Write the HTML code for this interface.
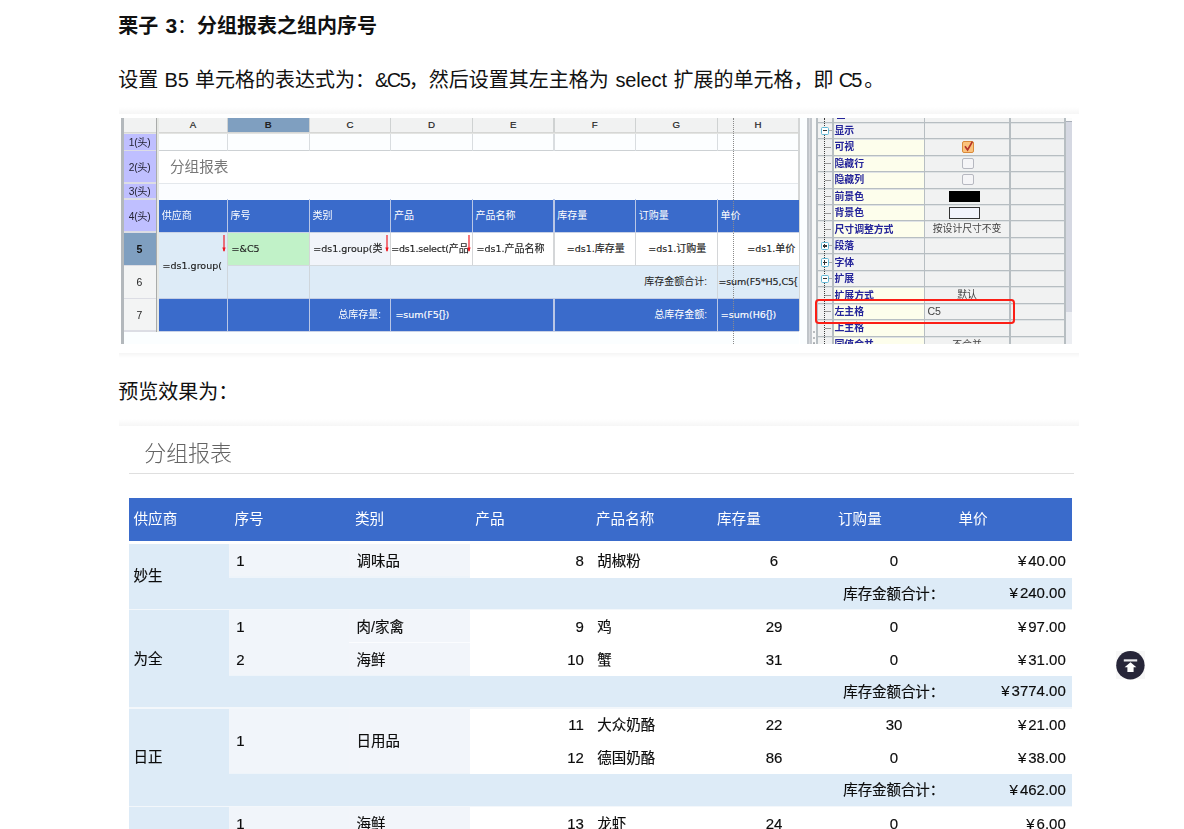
<!DOCTYPE html>
<html lang="zh-CN">
<head>
<meta charset="utf-8">
<title>分组报表之组内序号</title>
<style>
html,body{margin:0;padding:0;background:#fff;}
body{width:1184px;height:829px;overflow:hidden;position:relative;font-family:"Liberation Sans","Noto Sans CJK SC",sans-serif;}
body div, body svg, body h2, body p{position:absolute;white-space:nowrap;}
.img{left:0;top:0;width:1184px;height:829px;}
#design{filter:blur(0.35px);}
#preview{filter:blur(0.3px);}
.k{-webkit-text-stroke:0.16px;}
.w{display:inline-block;position:static;text-align:center;}
.f{font-family:"DejaVu Sans","Noto Sans CJK SC",sans-serif;-webkit-text-stroke:0.15px;}
.c{font-size:10px;}
.b{font-family:"Liberation Sans",sans-serif;font-size:10px;}
.ys{display:inline-block;width:2px;position:static;}
</style>
</head>
<body>
<!-- page text -->
<h2 class="t" style="left:118.3px;top:6px;height:40px;line-height:40px;font-size:20px;font-weight:bold;margin:0;color:#111;">栗子<span class="w" style="width:18.8px;text-align:right;font-size:21px;"> 3</span><span style="font-weight:normal">：</span>分组报表之组内序号</h2>
<p class="t" style="left:118.3px;top:59.5px;height:40px;line-height:40px;font-size:20px;margin:0;color:#111;">设置<span class="w" style="width:36.7px;"> B5 </span>单元格的表达式为：<span class="w" style="width:33.8px;letter-spacing:-1.5px;">&amp;C5</span>，然后设置其左主格为<span class="w" style="width:64.7px;letter-spacing:-0.15px;"> select </span>扩展的单元格，即<span class="w" style="width:27.2px;letter-spacing:-1.8px;text-align:right;"> C5</span><span style="margin-left:3.5px">。</span></p>
<p class="t" style="left:118.3px;top:371.5px;height:40px;line-height:40px;font-size:20px;margin:0;color:#111;">预览效果为：</p>
<!-- designer screenshot -->
<div class="img" id="design">
<div style="left:119.00px;top:106.70px;width:959.50px;height:6.90px;background:linear-gradient(#ffffff,#f6f6f6);"></div>
<div style="left:119.00px;top:352.70px;width:959.50px;height:5.30px;background:linear-gradient(#f5f5f5,#ffffff);"></div>
<div style="left:121.40px;top:118.00px;width:2.40px;height:226.00px;background:#b3b8bc;"></div>
<div style="left:123.80px;top:118.00px;width:675.40px;height:226.00px;background:#fbfeff;"></div>
<div style="left:123.80px;top:118.00px;width:675.40px;height:14.00px;background:#f1f2f2;"></div>
<div style="left:227.30px;top:118.00px;width:82.10px;height:14.00px;background:#7f9fc0;"></div>
<div style="left:123.80px;top:131.50px;width:675.40px;height:2.50px;background:linear-gradient(#cfd0ce,#e9eae8);"></div>
<div style="left:123.80px;top:134.00px;width:32.50px;height:98.30px;background:#bfbfff;"></div>
<div style="left:123.80px;top:232.30px;width:32.50px;height:33.20px;background:#7f9fc0;"></div>
<div style="left:123.80px;top:265.50px;width:32.50px;height:65.50px;background:#f3f4f4;"></div>
<div style="left:123.80px;top:149.60px;width:32.50px;height:1.60px;background:#dcdde4;"></div>
<div style="left:123.80px;top:182.10px;width:32.50px;height:1.60px;background:#dcdde4;"></div>
<div style="left:123.80px;top:198.10px;width:32.50px;height:1.60px;background:#dcdde4;"></div>
<div style="left:123.80px;top:231.40px;width:32.50px;height:1.60px;background:#dcdde4;"></div>
<div style="left:123.80px;top:264.60px;width:32.50px;height:1.60px;background:#dcdde4;"></div>
<div style="left:123.80px;top:297.60px;width:32.50px;height:1.60px;background:#dcdde4;"></div>
<div style="left:123.80px;top:330.10px;width:32.50px;height:1.60px;background:#dcdde4;"></div>
<div style="left:156.20px;top:118.00px;width:1.20px;height:213.50px;background:#a9abaa;"></div>
<div style="left:157.40px;top:118.00px;width:1.20px;height:213.50px;background:#e6e8e4;"></div>
<div style="left:226.60px;top:118.00px;width:1.40px;height:14.00px;background:#cfd2d2;"></div>
<div style="left:308.70px;top:118.00px;width:1.40px;height:14.00px;background:#cfd2d2;"></div>
<div style="left:390.00px;top:118.00px;width:1.40px;height:14.00px;background:#cfd2d2;"></div>
<div style="left:471.70px;top:118.00px;width:1.40px;height:14.00px;background:#cfd2d2;"></div>
<div style="left:553.30px;top:118.00px;width:1.40px;height:14.00px;background:#cfd2d2;"></div>
<div style="left:634.80px;top:118.00px;width:1.40px;height:14.00px;background:#cfd2d2;"></div>
<div style="left:716.50px;top:118.00px;width:1.40px;height:14.00px;background:#cfd2d2;"></div>
<div style="left:798.30px;top:118.00px;width:1.40px;height:14.00px;background:#cfd2d2;"></div>
<div style="left:158.60px;top:134.00px;width:640.40px;height:16.50px;background:#fcfeff;"></div>
<div style="left:158.60px;top:150.50px;width:640.40px;height:32.50px;background:#ffffff;"></div>
<div style="left:158.60px;top:183.00px;width:640.40px;height:16.00px;background:#fbfdff;"></div>
<div style="left:158.60px;top:149.90px;width:640.40px;height:1.20px;background:#cdd1d4;"></div>
<div style="left:158.60px;top:182.60px;width:640.40px;height:1.20px;background:#e4e8ec;"></div>
<div style="left:226.70px;top:134.00px;width:1.20px;height:16.50px;background:#d9dde0;"></div>
<div style="left:308.80px;top:134.00px;width:1.20px;height:16.50px;background:#d9dde0;"></div>
<div style="left:390.10px;top:134.00px;width:1.20px;height:16.50px;background:#d9dde0;"></div>
<div style="left:471.80px;top:134.00px;width:1.20px;height:16.50px;background:#d9dde0;"></div>
<div style="left:553.40px;top:134.00px;width:1.20px;height:16.50px;background:#d9dde0;"></div>
<div style="left:634.90px;top:134.00px;width:1.20px;height:16.50px;background:#d9dde0;"></div>
<div style="left:716.60px;top:134.00px;width:1.20px;height:16.50px;background:#d9dde0;"></div>
<div style="left:798.40px;top:134.00px;width:1.20px;height:16.50px;background:#d9dde0;"></div>
<div style="left:798.40px;top:118.00px;width:1.20px;height:213.00px;background:#d4d6d6;"></div>
<div style="left:158.60px;top:199.90px;width:640.40px;height:32.40px;background:#3a6bcb;"></div>
<div style="left:158.60px;top:232.30px;width:68.70px;height:66.20px;background:#ddebf7;"></div>
<div style="left:227.30px;top:232.30px;width:82.10px;height:33.20px;background:#c1f2c8;"></div>
<div style="left:309.40px;top:232.30px;width:81.30px;height:33.20px;background:#f1f4fa;"></div>
<div style="left:390.70px;top:232.30px;width:408.30px;height:33.20px;background:#ffffff;"></div>
<div style="left:227.30px;top:265.50px;width:571.70px;height:33.00px;background:#ddebf7;"></div>
<div style="left:158.60px;top:298.50px;width:640.40px;height:32.50px;background:#3a6bcb;"></div>
<div style="left:226.70px;top:199.00px;width:1.20px;height:33.30px;background:#b9c6e6;"></div>
<div style="left:308.80px;top:199.00px;width:1.20px;height:33.30px;background:#b9c6e6;"></div>
<div style="left:390.10px;top:199.00px;width:1.20px;height:33.30px;background:#b9c6e6;"></div>
<div style="left:471.80px;top:199.00px;width:1.20px;height:33.30px;background:#b9c6e6;"></div>
<div style="left:553.40px;top:199.00px;width:1.20px;height:33.30px;background:#b9c6e6;"></div>
<div style="left:634.90px;top:199.00px;width:1.20px;height:33.30px;background:#b9c6e6;"></div>
<div style="left:716.60px;top:199.00px;width:1.20px;height:33.30px;background:#b9c6e6;"></div>
<div style="left:226.70px;top:298.50px;width:1.20px;height:32.50px;background:#b9c6e6;"></div>
<div style="left:308.80px;top:298.50px;width:1.20px;height:32.50px;background:#b9c6e6;"></div>
<div style="left:390.10px;top:298.50px;width:1.20px;height:32.50px;background:#b9c6e6;"></div>
<div style="left:553.40px;top:298.50px;width:1.20px;height:32.50px;background:#b9c6e6;"></div>
<div style="left:716.60px;top:298.50px;width:1.20px;height:32.50px;background:#b9c6e6;"></div>
<div style="left:226.70px;top:232.30px;width:1.20px;height:33.20px;background:#d4d6d8;"></div>
<div style="left:308.80px;top:232.30px;width:1.20px;height:33.20px;background:#d4d6d8;"></div>
<div style="left:390.10px;top:232.30px;width:1.20px;height:33.20px;background:#d4d6d8;"></div>
<div style="left:471.80px;top:232.30px;width:1.20px;height:33.20px;background:#d4d6d8;"></div>
<div style="left:553.40px;top:232.30px;width:1.20px;height:33.20px;background:#d4d6d8;"></div>
<div style="left:634.90px;top:232.30px;width:1.20px;height:33.20px;background:#d4d6d8;"></div>
<div style="left:716.60px;top:232.30px;width:1.20px;height:33.20px;background:#d4d6d8;"></div>
<div style="left:226.70px;top:265.50px;width:1.20px;height:33.00px;background:#cfd6dc;"></div>
<div style="left:308.80px;top:265.50px;width:1.20px;height:33.00px;background:#cfd6dc;"></div>
<div style="left:716.60px;top:265.50px;width:1.20px;height:33.00px;background:#cfd6dc;"></div>
<div style="left:227.30px;top:265.00px;width:571.70px;height:1.00px;background:#d3d9de;"></div>
<div style="left:158.60px;top:231.80px;width:640.40px;height:1.00px;background:#c9d2e6;"></div>
<div style="left:158.60px;top:298.00px;width:640.40px;height:1.00px;background:#c3cde4;"></div>
<div style="left:158.60px;top:330.60px;width:640.40px;height:1.00px;background:#c9d2e6;"></div>
<div style="left:732.6px;top:118px;width:0;height:226px;border-left:1px dotted #8a8a8a;"></div>
<div style="left:-7.10px;width:400px;text-align:center;top:114.80px;height:19px;line-height:19px;font-size:9.7px;color:#222;-webkit-text-stroke:0.2px;">A</div>
<div style="left:68.35px;width:400px;text-align:center;top:114.80px;height:19px;line-height:19px;font-size:9.7px;color:#222;font-weight:bold;">B</div>
<div style="left:150.05px;width:400px;text-align:center;top:114.80px;height:19px;line-height:19px;font-size:9.7px;color:#222;-webkit-text-stroke:0.2px;">C</div>
<div style="left:231.55px;width:400px;text-align:center;top:114.80px;height:19px;line-height:19px;font-size:9.7px;color:#222;-webkit-text-stroke:0.2px;">D</div>
<div style="left:313.20px;width:400px;text-align:center;top:114.80px;height:19px;line-height:19px;font-size:9.7px;color:#222;-webkit-text-stroke:0.2px;">E</div>
<div style="left:394.75px;width:400px;text-align:center;top:114.80px;height:19px;line-height:19px;font-size:9.7px;color:#222;-webkit-text-stroke:0.2px;">F</div>
<div style="left:476.35px;width:400px;text-align:center;top:114.80px;height:19px;line-height:19px;font-size:9.7px;color:#222;-webkit-text-stroke:0.2px;">G</div>
<div style="left:558.10px;width:400px;text-align:center;top:114.80px;height:19px;line-height:19px;font-size:9.7px;color:#222;-webkit-text-stroke:0.2px;">H</div>
<div style="left:-60.40px;width:400px;text-align:center;top:132.90px;height:20px;line-height:20px;font-size:10.2px;color:#223;letter-spacing:-0.2px;">1(头)</div>
<div style="left:-60.40px;width:400px;text-align:center;top:157.80px;height:20px;line-height:20px;font-size:10.2px;color:#223;letter-spacing:-0.2px;">2(头)</div>
<div style="left:-60.40px;width:400px;text-align:center;top:182.40px;height:20px;line-height:20px;font-size:10.2px;color:#223;letter-spacing:-0.2px;">3(头)</div>
<div style="left:-60.40px;width:400px;text-align:center;top:206.60px;height:20px;line-height:20px;font-size:10.2px;color:#223;letter-spacing:-0.2px;">4(头)</div>
<div style="left:-60.60px;width:400px;text-align:center;top:238.70px;height:21px;line-height:21px;font-size:10.6px;color:#111;font-weight:bold;">5</div>
<div style="left:-60.60px;width:400px;text-align:center;top:271.70px;height:21px;line-height:21px;font-size:10.4px;color:#222;">6</div>
<div style="left:-60.60px;width:400px;text-align:center;top:304.70px;height:21px;line-height:21px;font-size:10.4px;color:#222;">7</div>
<div style="left:170.00px;top:152.50px;height:29px;line-height:29px;font-size:14.6px;color:#777;">分组报表</div>
<div style="left:161.70px;top:206.00px;height:20px;line-height:20px;font-size:10px;color:#fff;">供应商</div>
<div style="left:230.50px;top:206.00px;height:20px;line-height:20px;font-size:10px;color:#fff;">序号</div>
<div style="left:312.60px;top:206.00px;height:20px;line-height:20px;font-size:10px;color:#fff;">类别</div>
<div style="left:393.90px;top:206.00px;height:20px;line-height:20px;font-size:10px;color:#fff;">产品</div>
<div style="left:475.60px;top:206.00px;height:20px;line-height:20px;font-size:10px;color:#fff;">产品名称</div>
<div style="left:557.20px;top:206.00px;height:20px;line-height:20px;font-size:10px;color:#fff;">库存量</div>
<div style="left:638.70px;top:206.00px;height:20px;line-height:20px;font-size:10px;color:#fff;">订购量</div>
<div style="left:720.40px;top:206.00px;height:20px;line-height:20px;font-size:10px;color:#fff;">单价</div>
<div class="f" style="left:162.60px;top:255.90px;height:19px;line-height:19px;font-size:9.5px;color:#222;">=ds1.group(</div>
<div class="f" style="left:231.60px;top:238.90px;height:19px;line-height:19px;font-size:9.5px;color:#222;">=&amp;C5</div>
<div class="f" style="left:313.20px;top:238.90px;height:19px;line-height:19px;font-size:9.5px;color:#222;">=ds1.group(<span class="c">类</span></div>
<div style="left:390.7px;top:233px;width:81px;height:32px;overflow:hidden;">
<div class="f" style="letter-spacing:-0.2px;left:0.60px;top:5.90px;height:19px;line-height:19px;font-size:9.5px;color:#222;">=ds1.select(<span class="c">产品</span></div>
</div>
<div class="f" style="left:476.60px;top:238.90px;height:19px;line-height:19px;font-size:9.5px;color:#222;">=ds1.<span class="c">产品名称</span></div>
<div class="f" style="right:559.20px;top:238.90px;height:19px;line-height:19px;font-size:9.5px;color:#222;">=ds1.<span class="c">库存量</span></div>
<div class="f" style="right:477.70px;top:238.90px;height:19px;line-height:19px;font-size:9.5px;color:#222;">=ds1.<span class="c">订购量</span></div>
<div class="f" style="right:388.80px;top:238.90px;height:19px;line-height:19px;font-size:9.5px;color:#222;">=ds1.<span class="c">单价</span></div>
<div style="right:477.00px;top:271.80px;height:20px;line-height:20px;font-size:10px;color:#222;">库存金额合计:</div>
<div class="f" style="letter-spacing:-0.12px;left:718.40px;top:272.30px;height:19px;line-height:19px;font-size:9.5px;color:#222;">=sum(F5*H5,C5<span class="b">{</span></div>
<div style="right:803.00px;top:304.80px;height:20px;line-height:20px;font-size:10px;color:#fff;">总库存量:</div>
<div class="f" style="left:395.40px;top:305.30px;height:19px;line-height:19px;font-size:9.5px;color:#fff;">=sum(F5<span class="b">{}</span>)</div>
<div style="right:477.00px;top:304.80px;height:20px;line-height:20px;font-size:10px;color:#fff;">总库存金额:</div>
<div class="f" style="left:720.80px;top:305.30px;height:19px;line-height:19px;font-size:9.5px;color:#fff;">=sum(H6<span class="b">{}</span>)</div>
<svg style="left:220.50px;top:234.50px;" width="6" height="17.00" viewBox="0 0 6 17.00"><path d="M3 0V16.00" stroke="#f0141e" stroke-width="1.15" fill="none"/><path d="M1.3 12.40L3 17.00L4.7 12.40Z" fill="#f0141e"/></svg>
<svg style="left:384.30px;top:234.50px;" width="6" height="17.00" viewBox="0 0 6 17.00"><path d="M3 0V16.00" stroke="#f0141e" stroke-width="1.15" fill="none"/><path d="M1.3 12.40L3 17.00L4.7 12.40Z" fill="#f0141e"/></svg>
<svg style="left:465.50px;top:234.50px;" width="6" height="17.00" viewBox="0 0 6 17.00"><path d="M3 0V16.00" stroke="#f0141e" stroke-width="1.15" fill="none"/><path d="M1.3 12.40L3 17.00L4.7 12.40Z" fill="#f0141e"/></svg>
<div style="left:799.60px;top:118.00px;width:7.60px;height:226.00px;background:#fbfeff;"></div>
<div style="left:807.20px;top:118.00px;width:1.80px;height:226.00px;background:#bfc4c9;"></div>
<div style="left:809.00px;top:118.00px;width:1.00px;height:226.00px;background:#d5d8dc;"></div>
<div style="left:810.00px;top:118.00px;width:2.00px;height:226.00px;background:#c3c7cc;"></div>
<div style="left:812.00px;top:118.00px;width:4.00px;height:226.00px;background:#f7f8f8;"></div>
<div style="left:816.00px;top:118.00px;width:250.00px;height:226.00px;background:#f1f2f2;"></div>
<div style="left:1066.00px;top:121.50px;width:6.00px;height:222.50px;background:#d5d8e2;"></div>
<div style="left:1066.00px;top:118.00px;width:6.00px;height:2.50px;background:#fbfcfc;"></div>
<div style="left:1066.00px;top:120.50px;width:6.00px;height:1.80px;background:#a9afb9;"></div>
<div style="left:1066.00px;top:312.40px;width:6.00px;height:31.60px;background:#eceef2;"></div>
<div style="left:833.70px;top:138.75px;width:90.30px;height:16.45px;background:#fdfeec;"></div>
<div style="left:833.70px;top:155.20px;width:90.30px;height:16.45px;background:#fdfeec;"></div>
<div style="left:833.70px;top:171.65px;width:90.30px;height:16.45px;background:#fdfeec;"></div>
<div style="left:833.70px;top:188.10px;width:90.30px;height:16.45px;background:#fdfeec;"></div>
<div style="left:833.70px;top:204.55px;width:90.30px;height:16.45px;background:#fdfeec;"></div>
<div style="left:833.70px;top:221.00px;width:90.30px;height:16.45px;background:#fdfeec;"></div>
<div style="left:833.70px;top:286.80px;width:90.30px;height:16.45px;background:#fdfeec;"></div>
<div style="left:833.70px;top:303.25px;width:90.30px;height:16.45px;background:#fdfeec;"></div>
<div style="left:833.70px;top:319.70px;width:90.30px;height:16.45px;background:#fdfeec;"></div>
<div style="left:833.70px;top:336.15px;width:90.30px;height:7.85px;background:#fdfeec;"></div>
<div style="left:816.00px;top:122.00px;width:250.00px;height:1.00px;background:#b7bec2;"></div>
<div style="left:816.00px;top:123.00px;width:250.00px;height:0.40px;background:#dfe3e5;"></div>
<div style="left:816.00px;top:138.00px;width:250.00px;height:1.00px;background:#b7bec2;"></div>
<div style="left:816.00px;top:139.00px;width:250.00px;height:0.40px;background:#dfe3e5;"></div>
<div style="left:816.00px;top:155.00px;width:250.00px;height:1.00px;background:#b7bec2;"></div>
<div style="left:816.00px;top:156.00px;width:250.00px;height:0.40px;background:#dfe3e5;"></div>
<div style="left:816.00px;top:171.00px;width:250.00px;height:1.00px;background:#b7bec2;"></div>
<div style="left:816.00px;top:172.00px;width:250.00px;height:0.40px;background:#dfe3e5;"></div>
<div style="left:816.00px;top:188.00px;width:250.00px;height:1.00px;background:#b7bec2;"></div>
<div style="left:816.00px;top:189.00px;width:250.00px;height:0.40px;background:#dfe3e5;"></div>
<div style="left:816.00px;top:204.00px;width:250.00px;height:1.00px;background:#b7bec2;"></div>
<div style="left:816.00px;top:205.00px;width:250.00px;height:0.40px;background:#dfe3e5;"></div>
<div style="left:816.00px;top:220.00px;width:250.00px;height:1.00px;background:#b7bec2;"></div>
<div style="left:816.00px;top:221.00px;width:250.00px;height:0.40px;background:#dfe3e5;"></div>
<div style="left:816.00px;top:237.00px;width:250.00px;height:1.00px;background:#b7bec2;"></div>
<div style="left:816.00px;top:238.00px;width:250.00px;height:0.40px;background:#dfe3e5;"></div>
<div style="left:816.00px;top:253.00px;width:250.00px;height:1.00px;background:#b7bec2;"></div>
<div style="left:816.00px;top:254.00px;width:250.00px;height:0.40px;background:#dfe3e5;"></div>
<div style="left:816.00px;top:270.00px;width:250.00px;height:1.00px;background:#b7bec2;"></div>
<div style="left:816.00px;top:271.00px;width:250.00px;height:0.40px;background:#dfe3e5;"></div>
<div style="left:816.00px;top:286.00px;width:250.00px;height:1.00px;background:#b7bec2;"></div>
<div style="left:816.00px;top:287.00px;width:250.00px;height:0.40px;background:#dfe3e5;"></div>
<div style="left:816.00px;top:303.00px;width:250.00px;height:1.00px;background:#b7bec2;"></div>
<div style="left:816.00px;top:304.00px;width:250.00px;height:0.40px;background:#dfe3e5;"></div>
<div style="left:816.00px;top:319.00px;width:250.00px;height:1.00px;background:#b7bec2;"></div>
<div style="left:816.00px;top:320.00px;width:250.00px;height:0.40px;background:#dfe3e5;"></div>
<div style="left:816.00px;top:336.00px;width:250.00px;height:1.00px;background:#b7bec2;"></div>
<div style="left:816.00px;top:337.00px;width:250.00px;height:0.40px;background:#dfe3e5;"></div>
<div style="left:816.00px;top:118.00px;width:1.60px;height:226.00px;background:#b7bec2;"></div>
<div style="left:832.20px;top:118.00px;width:1.60px;height:226.00px;background:#b7bec2;"></div>
<div style="left:923.50px;top:118.00px;width:1.60px;height:226.00px;background:#b7bec2;"></div>
<div style="left:1009.00px;top:118.00px;width:1.60px;height:226.00px;background:#b7bec2;"></div>
<div style="left:1064.20px;top:118.00px;width:1.60px;height:226.00px;background:#b7bec2;"></div>
<div style="left:824.0px;top:118px;width:0;height:226px;border-left:1px dotted #3c3c3c;"></div>
<div style="left:820.50px;top:126.73px;width:8.20px;height:8.20px;background:#fff;border:1.4px solid #62b8d6;box-sizing:border-box;border-radius:1.6px;"></div>
<div style="left:822.50px;top:130.23px;width:4.20px;height:1.20px;background:#333;"></div>
<div style="left:829.00px;top:130.33px;width:2.60px;height:1.00px;background:#aaa;"></div>
<div style="left:834.60px;top:121.03px;height:20px;line-height:20px;font-size:9.9px;color:#25259a;font-weight:bold;letter-spacing:-0.1px;">显示</div>
<div style="left:825.20px;top:146.88px;width:6.20px;height:1.00px;background:#9a9a9a;"></div>
<div style="left:834.60px;top:137.47px;height:20px;line-height:20px;font-size:9.9px;color:#25259a;font-weight:bold;letter-spacing:-0.1px;">可视</div>
<div style="left:825.20px;top:163.32px;width:6.20px;height:1.00px;background:#9a9a9a;"></div>
<div style="left:834.60px;top:153.92px;height:20px;line-height:20px;font-size:9.9px;color:#25259a;font-weight:bold;letter-spacing:-0.1px;">隐藏行</div>
<div style="left:825.20px;top:179.78px;width:6.20px;height:1.00px;background:#9a9a9a;"></div>
<div style="left:834.60px;top:170.38px;height:20px;line-height:20px;font-size:9.9px;color:#25259a;font-weight:bold;letter-spacing:-0.1px;">隐藏列</div>
<div style="left:825.20px;top:196.22px;width:6.20px;height:1.00px;background:#9a9a9a;"></div>
<div style="left:834.60px;top:186.82px;height:20px;line-height:20px;font-size:9.9px;color:#25259a;font-weight:bold;letter-spacing:-0.1px;">前景色</div>
<div style="left:825.20px;top:212.68px;width:6.20px;height:1.00px;background:#9a9a9a;"></div>
<div style="left:834.60px;top:203.28px;height:20px;line-height:20px;font-size:9.9px;color:#25259a;font-weight:bold;letter-spacing:-0.1px;">背景色</div>
<div style="left:825.20px;top:229.12px;width:6.20px;height:1.00px;background:#9a9a9a;"></div>
<div style="left:834.60px;top:219.72px;height:20px;line-height:20px;font-size:9.9px;color:#25259a;font-weight:bold;letter-spacing:-0.1px;">尺寸调整方式</div>
<div style="left:820.50px;top:241.88px;width:8.20px;height:8.20px;background:#fff;border:1.4px solid #62b8d6;box-sizing:border-box;border-radius:1.6px;"></div>
<div style="left:822.50px;top:245.38px;width:4.20px;height:1.20px;background:#333;"></div>
<div style="left:824.00px;top:243.88px;width:1.20px;height:4.20px;background:#333;"></div>
<div style="left:829.00px;top:245.47px;width:2.60px;height:1.00px;background:#aaa;"></div>
<div style="left:834.60px;top:236.17px;height:20px;line-height:20px;font-size:9.9px;color:#25259a;font-weight:bold;letter-spacing:-0.1px;">段落</div>
<div style="left:820.50px;top:258.32px;width:8.20px;height:8.20px;background:#fff;border:1.4px solid #62b8d6;box-sizing:border-box;border-radius:1.6px;"></div>
<div style="left:822.50px;top:261.82px;width:4.20px;height:1.20px;background:#333;"></div>
<div style="left:824.00px;top:260.32px;width:1.20px;height:4.20px;background:#333;"></div>
<div style="left:829.00px;top:261.93px;width:2.60px;height:1.00px;background:#aaa;"></div>
<div style="left:834.60px;top:252.62px;height:20px;line-height:20px;font-size:9.9px;color:#25259a;font-weight:bold;letter-spacing:-0.1px;">字体</div>
<div style="left:820.50px;top:274.77px;width:8.20px;height:8.20px;background:#fff;border:1.4px solid #62b8d6;box-sizing:border-box;border-radius:1.6px;"></div>
<div style="left:822.50px;top:278.27px;width:4.20px;height:1.20px;background:#333;"></div>
<div style="left:829.00px;top:278.38px;width:2.60px;height:1.00px;background:#aaa;"></div>
<div style="left:834.60px;top:269.07px;height:20px;line-height:20px;font-size:9.9px;color:#25259a;font-weight:bold;letter-spacing:-0.1px;">扩展</div>
<div style="left:825.20px;top:294.92px;width:6.20px;height:1.00px;background:#9a9a9a;"></div>
<div style="left:834.60px;top:285.52px;height:20px;line-height:20px;font-size:9.9px;color:#25259a;font-weight:bold;letter-spacing:-0.1px;">扩展方式</div>
<div style="left:825.20px;top:311.38px;width:6.20px;height:1.00px;background:#9a9a9a;"></div>
<div style="left:834.60px;top:301.98px;height:20px;line-height:20px;font-size:9.9px;color:#25259a;font-weight:bold;letter-spacing:-0.1px;">左主格</div>
<div style="left:825.20px;top:327.82px;width:6.20px;height:1.00px;background:#9a9a9a;"></div>
<div style="left:834.60px;top:318.42px;height:20px;line-height:20px;font-size:9.9px;color:#25259a;font-weight:bold;letter-spacing:-0.1px;">上主格</div>
<div style="left:825.20px;top:344.27px;width:6.20px;height:1.00px;background:#9a9a9a;"></div>
<div style="left:834.60px;top:334.88px;height:20px;line-height:20px;font-size:9.9px;color:#25259a;font-weight:bold;letter-spacing:-0.1px;">同值合并</div>
<div style="left:836.50px;top:118.00px;width:8.50px;height:1.20px;background:#25259a;"></div>
<div style="left:962.20px;top:141.38px;width:11.40px;height:11.20px;background:#fbc27c;border:1.2px solid #d98a3a;box-sizing:border-box;border-radius:2px;"></div>
<svg style="left:962.2px;top:139.97px;" width="13" height="13" viewBox="0 0 13 13"><path d="M3 6.2L5.6 10L10.4 1.6" stroke="#b5342a" stroke-width="1.7" fill="none"/></svg>
<div style="left:962.20px;top:157.82px;width:11.40px;height:11.20px;background:#f5f5f7;border:1.2px solid #b6b8c0;box-sizing:border-box;border-radius:2px;"></div>
<div style="left:962.20px;top:174.28px;width:11.40px;height:11.20px;background:#f5f5f7;border:1.2px solid #b6b8c0;box-sizing:border-box;border-radius:2px;"></div>
<div style="left:949.00px;top:190.52px;width:31.00px;height:11.60px;background:#000;"></div>
<div style="left:949.00px;top:206.97px;width:31.00px;height:11.60px;background:#f2f4fc;border:1.2px solid #333;box-sizing:border-box;"></div>
<div style="left:767.05px;width:400px;text-align:center;top:219.42px;height:20px;line-height:20px;font-size:9.9px;color:#444;letter-spacing:-0.1px;">按设计尺寸不变</div>
<div style="left:767.05px;width:400px;text-align:center;top:285.22px;height:20px;line-height:20px;font-size:9.9px;color:#444;">默认</div>
<div style="left:927.40px;top:301.38px;height:21px;line-height:21px;font-size:10.6px;color:#444;">C5</div>
<div style="left:767.05px;width:400px;text-align:center;top:334.57px;height:20px;line-height:20px;font-size:9.9px;color:#444;">不合并</div>
<div style="left:812.70px;top:330.60px;width:2.40px;height:2.40px;background:#a6aaae;border-radius:1.2px;"></div>
<div style="left:812.70px;top:336.50px;width:2.40px;height:2.40px;background:#a6aaae;border-radius:1.2px;"></div>
<div style="left:812.70px;top:342.20px;width:2.40px;height:2.40px;background:#a6aaae;border-radius:1.2px;"></div>
<div style="left:119.00px;top:344.00px;width:961.00px;height:8.70px;background:#fff;"></div>
<div style="left:815.00px;top:299.40px;width:200.40px;height:24.60px;background:transparent;border:2.9px solid #fb1f16;box-sizing:border-box;border-radius:3.8px;"></div>
</div>
<!-- preview screenshot -->
<div class="img" id="preview">
<div style="left:119.00px;top:419.00px;width:959.50px;height:7.00px;background:linear-gradient(#ffffff,#f6f6f6);"></div>
<div style="left:144.30px;top:432.00px;height:44px;line-height:44px;font-size:22px;color:#646464;font-weight:300;letter-spacing:-0.1px;">分组报表</div>
<div style="left:128.70px;top:472.70px;width:945.10px;height:1.20px;background:#dfdfdf;"></div>
<div style="left:128.70px;top:497.50px;width:943.60px;height:43.30px;background:#3a6bcb;"></div>
<div style="left:133.50px;top:504.50px;height:29px;line-height:29px;font-size:14.6px;color:#fff;">供应商</div>
<div style="left:234.50px;top:504.50px;height:29px;line-height:29px;font-size:14.6px;color:#fff;">序号</div>
<div style="left:355.00px;top:504.50px;height:29px;line-height:29px;font-size:14.6px;color:#fff;">类别</div>
<div style="left:475.30px;top:504.50px;height:29px;line-height:29px;font-size:14.6px;color:#fff;">产品</div>
<div style="left:596.00px;top:504.50px;height:29px;line-height:29px;font-size:14.6px;color:#fff;">产品名称</div>
<div style="left:717.00px;top:504.50px;height:29px;line-height:29px;font-size:14.6px;color:#fff;">库存量</div>
<div style="left:838.00px;top:504.50px;height:29px;line-height:29px;font-size:14.6px;color:#fff;">订购量</div>
<div style="left:958.50px;top:504.50px;height:29px;line-height:29px;font-size:14.6px;color:#fff;">单价</div>
<div style="left:128.70px;top:543.80px;width:943.60px;height:65.30px;background:#ddebf7;"></div>
<div style="left:229.20px;top:543.80px;width:843.10px;height:33.80px;background:#fff;"></div>
<div style="left:229.20px;top:543.80px;width:240.80px;height:32.50px;background:#f1f5fa;"></div>
<div style="left:349.00px;top:543.80px;width:121.00px;height:32.50px;background:#f2f5fa;"></div>
<div style="left:229.20px;top:576.30px;width:240.80px;height:1.30px;background:#eef4fa;"></div>
<div class="k" style="left:133.50px;top:562.45px;height:29px;line-height:29px;font-size:14.5px;color:#0c0c0c;">妙生</div>
<div class="k" style="left:236.20px;top:545.65px;height:30px;line-height:30px;font-size:15px;color:#0c0c0c;">1</div>
<div class="k" style="left:356.60px;top:546.85px;height:29px;line-height:29px;font-size:14.5px;color:#0c0c0c;">调味品</div>
<div class="k" style="right:600.20px;top:545.65px;height:30px;line-height:30px;font-size:15px;color:#0c0c0c;">8</div>
<div class="k" style="left:597.20px;top:546.85px;height:29px;line-height:29px;font-size:14.5px;color:#0c0c0c;">胡椒粉</div>
<div class="k" style="left:574.00px;width:400px;text-align:center;top:545.65px;height:30px;line-height:30px;font-size:15px;color:#0c0c0c;">6</div>
<div class="k" style="left:694.00px;width:400px;text-align:center;top:545.65px;height:30px;line-height:30px;font-size:15px;color:#0c0c0c;">0</div>
<div class="k" style="right:118.20px;top:545.65px;height:30px;line-height:30px;font-size:15px;color:#0c0c0c;">¥<span class="ys"></span>40.00</div>
<div class="k" style="left:843.30px;top:579.55px;height:29px;line-height:29px;font-size:14.5px;color:#0c0c0c;letter-spacing:-0.1px;">库存金额合计：</div>
<div class="k" style="right:118.20px;top:578.05px;height:30px;line-height:30px;font-size:15px;color:#0c0c0c;">¥<span class="ys"></span>240.00</div>
<div style="left:128.70px;top:609.00px;width:943.60px;height:1.50px;background:#f3f7fb;"></div>
<div style="left:128.70px;top:610.40px;width:943.60px;height:97.10px;background:#ddebf7;"></div>
<div style="left:229.20px;top:610.40px;width:843.10px;height:65.60px;background:#fff;"></div>
<div style="left:229.20px;top:610.40px;width:240.80px;height:64.30px;background:#f1f5fa;"></div>
<div style="left:349.00px;top:610.40px;width:121.00px;height:31.50px;background:#f2f5fa;"></div>
<div style="left:349.00px;top:643.20px;width:121.00px;height:31.50px;background:#f2f5fa;"></div>
<div style="left:349.00px;top:641.90px;width:121.00px;height:1.30px;background:#fbfcfe;"></div>
<div style="left:229.20px;top:674.70px;width:240.80px;height:1.30px;background:#eef4fa;"></div>
<div class="k" style="left:133.50px;top:644.95px;height:29px;line-height:29px;font-size:14.5px;color:#0c0c0c;">为全</div>
<div class="k" style="left:236.20px;top:611.75px;height:30px;line-height:30px;font-size:15px;color:#0c0c0c;">1</div>
<div class="k" style="left:356.60px;top:612.95px;height:29px;line-height:29px;font-size:14.5px;color:#0c0c0c;">肉/家禽</div>
<div class="k" style="right:600.20px;top:611.75px;height:30px;line-height:30px;font-size:15px;color:#0c0c0c;">9</div>
<div class="k" style="left:597.20px;top:612.95px;height:29px;line-height:29px;font-size:14.5px;color:#0c0c0c;">鸡</div>
<div class="k" style="left:574.00px;width:400px;text-align:center;top:611.75px;height:30px;line-height:30px;font-size:15px;color:#0c0c0c;">29</div>
<div class="k" style="left:694.00px;width:400px;text-align:center;top:611.75px;height:30px;line-height:30px;font-size:15px;color:#0c0c0c;">0</div>
<div class="k" style="right:118.20px;top:611.75px;height:30px;line-height:30px;font-size:15px;color:#0c0c0c;">¥<span class="ys"></span>97.00</div>
<div class="k" style="left:236.20px;top:644.55px;height:30px;line-height:30px;font-size:15px;color:#0c0c0c;">2</div>
<div class="k" style="left:356.60px;top:645.75px;height:29px;line-height:29px;font-size:14.5px;color:#0c0c0c;">海鲜</div>
<div class="k" style="right:600.20px;top:644.55px;height:30px;line-height:30px;font-size:15px;color:#0c0c0c;">10</div>
<div class="k" style="left:597.20px;top:645.75px;height:29px;line-height:29px;font-size:14.5px;color:#0c0c0c;">蟹</div>
<div class="k" style="left:574.00px;width:400px;text-align:center;top:644.55px;height:30px;line-height:30px;font-size:15px;color:#0c0c0c;">31</div>
<div class="k" style="left:694.00px;width:400px;text-align:center;top:644.55px;height:30px;line-height:30px;font-size:15px;color:#0c0c0c;">0</div>
<div class="k" style="right:118.20px;top:644.55px;height:30px;line-height:30px;font-size:15px;color:#0c0c0c;">¥<span class="ys"></span>31.00</div>
<div class="k" style="left:843.30px;top:677.95px;height:29px;line-height:29px;font-size:14.5px;color:#0c0c0c;letter-spacing:-0.1px;">库存金额合计：</div>
<div class="k" style="right:118.20px;top:676.45px;height:30px;line-height:30px;font-size:15px;color:#0c0c0c;">¥<span class="ys"></span>3774.00</div>
<div style="left:128.70px;top:707.40px;width:943.60px;height:1.50px;background:#f3f7fb;"></div>
<div style="left:128.70px;top:708.80px;width:943.60px;height:97.10px;background:#ddebf7;"></div>
<div style="left:229.20px;top:708.80px;width:843.10px;height:65.60px;background:#fff;"></div>
<div style="left:229.20px;top:708.80px;width:240.80px;height:64.30px;background:#f1f5fa;"></div>
<div style="left:349.00px;top:708.80px;width:121.00px;height:64.30px;background:#f2f5fa;"></div>
<div style="left:229.20px;top:773.10px;width:240.80px;height:1.30px;background:#eef4fa;"></div>
<div class="k" style="left:133.50px;top:743.35px;height:29px;line-height:29px;font-size:14.5px;color:#0c0c0c;">日正</div>
<div class="k" style="left:236.20px;top:726.05px;height:30px;line-height:30px;font-size:15px;color:#0c0c0c;">1</div>
<div class="k" style="left:356.60px;top:727.25px;height:29px;line-height:29px;font-size:14.5px;color:#0c0c0c;">日用品</div>
<div class="k" style="right:600.20px;top:710.15px;height:30px;line-height:30px;font-size:15px;color:#0c0c0c;">11</div>
<div class="k" style="left:597.20px;top:711.35px;height:29px;line-height:29px;font-size:14.5px;color:#0c0c0c;">大众奶酪</div>
<div class="k" style="left:574.00px;width:400px;text-align:center;top:710.15px;height:30px;line-height:30px;font-size:15px;color:#0c0c0c;">22</div>
<div class="k" style="left:694.00px;width:400px;text-align:center;top:710.15px;height:30px;line-height:30px;font-size:15px;color:#0c0c0c;">30</div>
<div class="k" style="right:118.20px;top:710.15px;height:30px;line-height:30px;font-size:15px;color:#0c0c0c;">¥<span class="ys"></span>21.00</div>
<div class="k" style="right:600.20px;top:742.95px;height:30px;line-height:30px;font-size:15px;color:#0c0c0c;">12</div>
<div class="k" style="left:597.20px;top:744.15px;height:29px;line-height:29px;font-size:14.5px;color:#0c0c0c;">德国奶酪</div>
<div class="k" style="left:574.00px;width:400px;text-align:center;top:742.95px;height:30px;line-height:30px;font-size:15px;color:#0c0c0c;">86</div>
<div class="k" style="left:694.00px;width:400px;text-align:center;top:742.95px;height:30px;line-height:30px;font-size:15px;color:#0c0c0c;">0</div>
<div class="k" style="right:118.20px;top:742.95px;height:30px;line-height:30px;font-size:15px;color:#0c0c0c;">¥<span class="ys"></span>38.00</div>
<div class="k" style="left:843.30px;top:776.35px;height:29px;line-height:29px;font-size:14.5px;color:#0c0c0c;letter-spacing:-0.1px;">库存金额合计：</div>
<div class="k" style="right:118.20px;top:774.85px;height:30px;line-height:30px;font-size:15px;color:#0c0c0c;">¥<span class="ys"></span>462.00</div>
<div style="left:128.70px;top:805.80px;width:943.60px;height:1.50px;background:#f3f7fb;"></div>
<div style="left:128.70px;top:807.20px;width:943.60px;height:21.80px;background:#ddebf7;"></div>
<div style="left:229.20px;top:807.20px;width:843.10px;height:21.80px;background:#fff;"></div>
<div style="left:229.20px;top:807.20px;width:240.80px;height:31.50px;background:#f1f5fa;"></div>
<div style="left:349.00px;top:807.20px;width:121.00px;height:31.50px;background:#f2f5fa;"></div>
<div class="k" style="left:236.20px;top:808.55px;height:30px;line-height:30px;font-size:15px;color:#0c0c0c;">1</div>
<div class="k" style="left:356.60px;top:809.75px;height:29px;line-height:29px;font-size:14.5px;color:#0c0c0c;">海鲜</div>
<div class="k" style="right:600.20px;top:808.55px;height:30px;line-height:30px;font-size:15px;color:#0c0c0c;">13</div>
<div class="k" style="left:597.20px;top:809.75px;height:29px;line-height:29px;font-size:14.5px;color:#0c0c0c;">龙虾</div>
<div class="k" style="left:574.00px;width:400px;text-align:center;top:808.55px;height:30px;line-height:30px;font-size:15px;color:#0c0c0c;">24</div>
<div class="k" style="left:694.00px;width:400px;text-align:center;top:808.55px;height:30px;line-height:30px;font-size:15px;color:#0c0c0c;">0</div>
<div class="k" style="right:118.20px;top:808.55px;height:30px;line-height:30px;font-size:15px;color:#0c0c0c;">¥<span class="ys"></span>6.00</div>
</div>
<!-- back to top -->
<div style="left:1116.00px;top:651.00px;width:29.00px;height:28.00px;background:#f7f7f7;"></div>
<svg style="left:1116px;top:650.5px;" width="29" height="29" viewBox="0 0 29 29"><circle cx="14.4" cy="14.3" r="14.2" fill="#272639"/><rect x="7.8" y="8.3" width="13.4" height="2.2" fill="#e9e9ec"/><path d="M14.5 11.3L20.4 16.2H17.6V21H11.4V16.2H8.6Z" fill="#fff"/></svg>
</body>
</html>
